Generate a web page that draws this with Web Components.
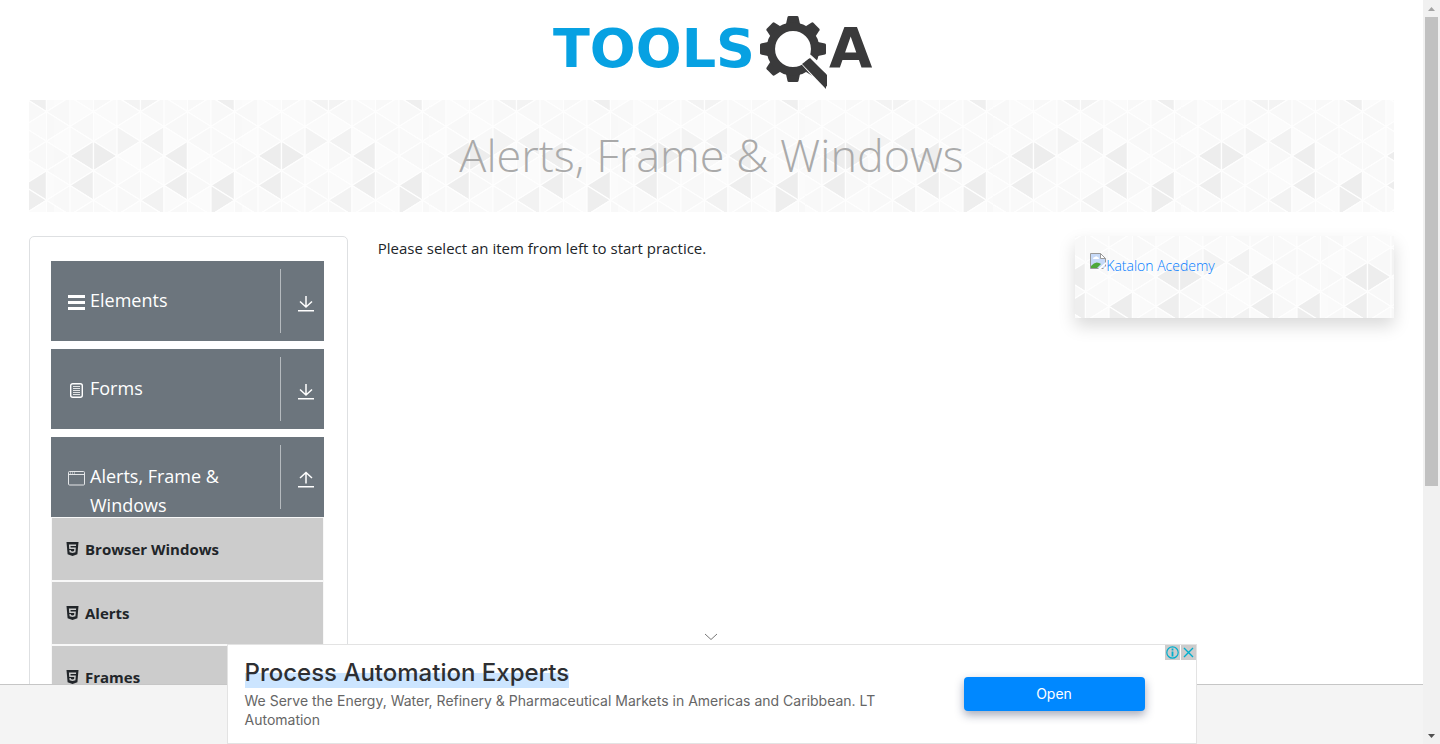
<!DOCTYPE html>
<html lang="en">
<head>
<meta charset="utf-8">
<title>ToolsQA</title>
<style>
  html, body { height: 100%; margin: 0; }
  body { background: #fff; color: #212529; font: 16px/24px "Open Sans", "Noto Sans", sans-serif; overflow: hidden; }
</style>
</head>
<body>
<demo-app></demo-app>

<template id="t-app">
  <style>
    :host { display: grid; grid-template-columns: 1fr 17px; height: 100vh; }
    .view { position: relative; overflow: hidden; }
    main { padding: 0 29px; }
    .cols { display: grid; grid-template-columns: repeat(4, 1fr); gap: 30px; margin-top: 24px; align-items: start; }
    .mid { grid-column: span 2; }
    p { margin: 0; font-size: 15px; }
    ad-anchor { position: absolute; left: 0; right: 0; bottom: 0; }
  </style>
  <div class="view">
    <site-logo></site-logo>
    <main>
      <page-banner>Alerts, Frame &amp; Windows</page-banner>
      <div class="cols">
        <side-menu>
          <menu-group icon="list">Elements</menu-group>
          <menu-group icon="form">Forms</menu-group>
          <menu-group icon="window" open>Alerts, Frame &amp; Windows
            <menu-item slot="items">Browser Windows</menu-item>
            <menu-item slot="items">Alerts</menu-item>
            <menu-item slot="items">Frames</menu-item>
          </menu-group>
        </side-menu>
        <div class="mid"><p>Please select an item from left to start practice.</p></div>
        <promo-card>Katalon Acedemy</promo-card>
      </div>
    </main>
    <ad-anchor>
      <span slot="title">Process Automation Experts</span>
      <span slot="text">We Serve the Energy, Water, Refinery &amp; Pharmaceutical Markets in Americas and Caribbean. LT Automation</span>
      <span slot="action">Open</span>
    </ad-anchor>
  </div>
  <scroll-track></scroll-track>
</template>

<template id="t-logo">
  <style>
    :host { display: flex; justify-content: center; height: 84px; padding: 16px 0 0 6px; }
    a { display: block; height: 74px; }
    svg { display: block; overflow: visible; }
    text { font-family: "DejaVu Sans", sans-serif; font-weight: 700; }
  </style>
  <a href="#" aria-label="ToolsQA home">
    <svg width="326" height="74" viewBox="0 0 326 74">
      <text x="1" y="51" font-size="54" fill="#07a1e2">TOOLS</text>
      <g id="gear" fill="#3a3a3b"></g>
      <path d="M250 46l7-6 20 18v18z" fill="#3a3a3b" stroke="#fff" stroke-width="4"/>
      <path d="M250 48l8-6 16 16v15z" fill="#3a3a3b"/>
      <text x="277" y="51" font-size="56" fill="#3a3a3b">A</text>
    </svg>
  </a>
</template>

<template id="t-banner">
  <style>
    :host { display: block; background: #fbfbfb var(--tile) center; padding: 19px 0 21px; text-align: center; }
    h1 { margin: 0; font-size: 45px; line-height: 72px; font-weight: 300; color: #aaa; }
  </style>
  <h1><slot></slot></h1>
</template>

<template id="t-side">
  <style>
    :host { display: flex; flex-direction: column; gap: 8px; border: 1px solid #dee0e2; border-radius: 5px; padding: 24px 23px 24px 21px; }
  </style>
  <slot></slot>
</template>

<template id="t-group">
  <style>
    :host { display: block; }
    button { display: grid; grid-template-columns: 17px 1fr 44px; column-gap: 5px; width: 100%; height: 80px; padding: 0 0 0 17px; border: 0; background: #6c757d; color: #fff; font: 18px/29px "Open Sans", sans-serif; text-align: left; overflow: hidden; align-items: start; }
    .ico { padding-top: 33px; line-height: 0; }
    .label { padding-top: 25px; height: 55px; }
    .end { margin-top: 8px; height: 64px; border-left: 1px solid #b5babe; display: grid; place-items: center; padding: 5px 0 0 8px; box-sizing: border-box; }
    svg { display: block; }
  </style>
  <button type="button"><span class="ico"></span><span class="label"><slot></slot></span><span class="end"></span></button>
  <slot name="items"></slot>
</template>

<template id="t-item">
  <style>
    :host { display: block; }
    a { display: flex; align-items: center; gap: 6px; box-sizing: border-box; height: 64px; padding: 0 14px; border: 1px solid #f8f8f8; background: #ccc; color: #212529; font-size: 15px; font-weight: 700; text-decoration: none; }
  </style>
  <a href="#"><svg width="13" height="14" viewBox="0 0 384 448"><path fill="#212529" d="M0 0h384l-35 392-157 56-157-56z"/><path fill="#ccc" d="M308 81H76l13 141h160l-6 65-51 14-52-14-3-34H92l6 71 94 26 94-26 13-149H132l-4-47h176z"/></svg><slot></slot></a>
</template>

<template id="t-card">
  <style>
    :host { display: block; background: #fbfbfb var(--tile) center; box-shadow: 0 8px 16px rgba(0,0,0,.15); padding: 17px 15px; height: 48px; }
    a { display: flex; color: #007bff; font-size: 14px; line-height: 26px; font-weight: 300; text-decoration: none; }
  </style>
  <a href="#">
    <svg width="16" height="16" viewBox="0 0 16 16"><path d="M.5.5h10l5 5v10H.5z" fill="#c6d9f8" stroke="#9a9a9a"/><path d="M10.500.500v5h5z" fill="#fff" stroke="#9a9a9a"/><path d="M3 6q0-2 2-2 1-1.500 2.500 0Q9 4 9 6z" fill="#fff"/><path d="M1 15v-2q4-5 8-3l2 1-4 4z" fill="#4fa83a"/><path d="M8 16L16 9v2l-5 5zM13 16l3-3v3z" fill="#fff"/></svg>
    <slot></slot>
  </a>
</template>

<template id="t-ad">
  <style>
    :host { display: grid; justify-items: center; grid-template-rows: 20px 100px; }
    .strip { grid-area: 2 / 1; align-self: end; width: 100%; height: 60px; box-sizing: border-box; border-top: 1px solid #c6c6c6; background: #f4f4f4; }
    .toggle { grid-area: 1 / 1; border: 0; background: none; padding: 9px 0 0; width: 31px; height: 20px; display: grid; justify-items: center; margin-right: 2px; }
    .ad { grid-area: 2 / 1; position: relative; box-sizing: border-box; width: 970px; max-width: 100%; height: 100px; background: #fff; border: 1px solid #e3e3e3; display: grid; grid-template-columns: 1fr 181px; column-gap: 56px; padding: 0 51px 0 17px; align-items: center; font-family: Inter, sans-serif; }
    .copy { padding-bottom: 2px; }
    h2 { margin: 0; font: 500 24px/30px Inter, sans-serif; color: #2e2f32; }
    h2 span { display: inline-block; background: linear-gradient(#fff 50%, #cce5ff 50%); }
    p { margin: 3px 0 0; font-size: 14px; line-height: 19px; color: #666; }
    .go { height: 34px; border: 0; border-radius: 4px; background: #08f; color: #fff; font: 400 14px/20px Inter, sans-serif; box-shadow: 0 4px 10px rgba(30,40,80,.4); }
    .marks { position: absolute; top: 0; right: 0; display: flex; gap: 1px; }
    .marks button { border: 0; padding: 0; width: 15px; height: 15px; background: #ccc; }
    .marks svg { display: block; }
  </style>
  <div class="strip"></div>
  <button class="toggle" type="button" aria-label="Hide ad"><svg width="14" height="8" viewBox="0 0 14 8"><path d="M1 1l6 5.500L13 1" fill="none" stroke="#777"/></svg></button>
  <div class="ad">
    <div class="copy"><h2><span><slot name="title"></slot></span></h2><p><slot name="text"></slot></p></div>
    <button class="go" type="button"><slot name="action"></slot></button>
    <div class="marks">
      <button type="button" aria-label="About this ad"><svg width="15" height="15" viewBox="0 0 15 15" fill="none" stroke="#00aecd"><circle cx="7.500" cy="7.500" r="5.700" stroke-width="1.200"/><path d="M7.500 6.500v5M7.500 3.500v2" stroke-width="1.800"/></svg></button>
      <button type="button" aria-label="Close ad"><svg width="15" height="15" viewBox="0 0 15 15" fill="none" stroke="#00aecd" stroke-width="1.400"><path d="M3 3l9 9M12 3l-9 9"/></svg></button>
    </div>
  </div>
</template>

<template id="t-scroll">
  <style>
    :host { display: grid; grid-template-rows: 17px 1fr 17px; background: #f1f1f1; justify-items: center; }
    svg { display: block; align-self: center; }
    .thumb { width: 13px; height: 66%; background: #c1c1c1; }
  </style>
  <svg width="7" height="4"><path d="M0 4l3.500-4L7 4z" fill="#a3a3a3"/></svg>
  <div class="thumb"></div>
  <svg width="7" height="4"><path d="M0 0l3.500 4L7 0z" fill="#505050"/></svg>
</template>

<script>
  // Triangular tile: 8 strips of 23.5px, 8 half rows of 14.75px, repeated from the centre.
  function buildTile() {
    const shades = { '-1,0': 'ededed', '0,0': 'ededed', '3,0': 'eeeeee', '-1,2': 'eeeeee', '3,2': 'eeeeee',
      '5,2': 'ededed', '5,3': 'eeeeee', '2,3': 'f2f2f2', '1,-1': 'f3f3f3', '2,-1': 'f2f2f2',
      '5,-4': 'efefef', '1,-4': 'f3f3f3', '2,-4': 'f3f3f3' };
    const light = ['f8f8f8', 'fafafa', 'f8f8f8', 'fbfbfb', 'f9f9f9'];
    let out = '';
    for (let i = -2; i <= 6; i++) for (let j = -5; j <= 5; j++) {
      const x = 39.5 + 23.5 * i, y = 59 + 14.75 * j, x2 = x + 23.5;
      const right = (i + j) % 2 === 0;
      const key = (i === 6 ? -2 : i) + ',' + j;
      const fill = shades[key] || light[Math.abs(i * 3 + j * 2 + (right ? 1 : 0)) % 5];
      const base = right ? x : x2, apex = right ? x2 : x;
      out += `<path fill="#${fill}" d="M${base} ${y - 14.75}V${y + 14.75}L${apex} ${y}z"/>`;
    }
    const svg = `<svg xmlns="http://www.w3.org/2000/svg" width="188" height="118"><g stroke="#fefefe" stroke-width="1.3" stroke-linejoin="round">${out}</g></svg>`;
    return `url("data:image/svg+xml,${encodeURIComponent(svg)}")`;
  }
  document.documentElement.style.setProperty('--tile', buildTile());

  const icons = {
    list: '<svg width="17" height="17" viewBox="0 0 17 17"><path d="M0 1h17v3H0zM0 7h17v3H0zM0 13h17v3H0z" fill="#fff"/></svg>',
    form: '<svg width="17" height="17" viewBox="0 0 17 17" fill="none" stroke="#fff"><rect x="2.700" y="1.700" width="11.600" height="13.600" rx="2" stroke-width="1.400"/><path d="M5 4.500h7M5 6.500h7M5 8.500h7M5 10.500h7M5 12.500h7" stroke-width=".8"/></svg>',
    window: '<svg width="17" height="17" viewBox="0 0 17 17" fill="none" stroke="#e4e6e8"><rect x=".5" y="1.500" width="16" height="13.500" rx="1"/><path d="M.5 4.500h16" /><path d="M2 3h1M4 3h1M6 3h1" stroke-width="1.200"/></svg>',
    down: '<svg width="16" height="17" viewBox="0 0 16 17" fill="none" stroke="#fff" stroke-width="1.500"><path d="M8 1v11M2 6.500l6 5.500 6-5.500M0 15.700h16"/></svg>',
    up: '<svg width="16" height="17" viewBox="0 0 16 17" fill="none" stroke="#fff" stroke-width="1.500"><path d="M8 12.500V1.500M2 7l6-5.500L14 7M0 15.700h16"/></svg>'
  };

  class Base extends HTMLElement {
    constructor() {
      super();
      const root = this.attachShadow({ mode: 'open' });
      root.append(document.getElementById(this.constructor.template).content.cloneNode(true));
    }
  }
  class SiteLogo extends Base {
    static template = 't-logo';
    connectedCallback() {
      // Gear ring with eight teeth around a hole.
      let teeth = '';
      for (let a = 0; a < 360; a += 45) teeth += `<path d="M234 8l1.500-7q.3-1 1.300-1h8.400q1 0 1.300 1L248 8z" transform="rotate(${a} 241 33)"/>`;
      this.shadowRoot.getElementById('gear').innerHTML = teeth + '<circle cx="241" cy="33" r="22.200" fill="none" stroke="#3a3a3b" stroke-width="8.500"/>';
    }
  }
  class PageBanner extends Base { static template = 't-banner'; }
  class SideMenu extends Base { static template = 't-side'; }
  class MenuGroup extends Base {
    static template = 't-group';
    connectedCallback() {
      this.shadowRoot.querySelector('.ico').innerHTML = icons[this.getAttribute('icon')];
      this.shadowRoot.querySelector('.end').innerHTML = icons[this.hasAttribute('open') ? 'up' : 'down'];
    }
  }
  class MenuItem extends Base { static template = 't-item'; }
  class PromoCard extends Base { static template = 't-card'; }
  class AdAnchor extends Base { static template = 't-ad'; }
  class ScrollTrack extends Base { static template = 't-scroll'; }
  class DemoApp extends Base { static template = 't-app'; }

  customElements.define('site-logo', SiteLogo);
  customElements.define('page-banner', PageBanner);
  customElements.define('side-menu', SideMenu);
  customElements.define('menu-group', MenuGroup);
  customElements.define('menu-item', MenuItem);
  customElements.define('promo-card', PromoCard);
  customElements.define('ad-anchor', AdAnchor);
  customElements.define('scroll-track', ScrollTrack);
  customElements.define('demo-app', DemoApp);
</script>
</body>
</html>
